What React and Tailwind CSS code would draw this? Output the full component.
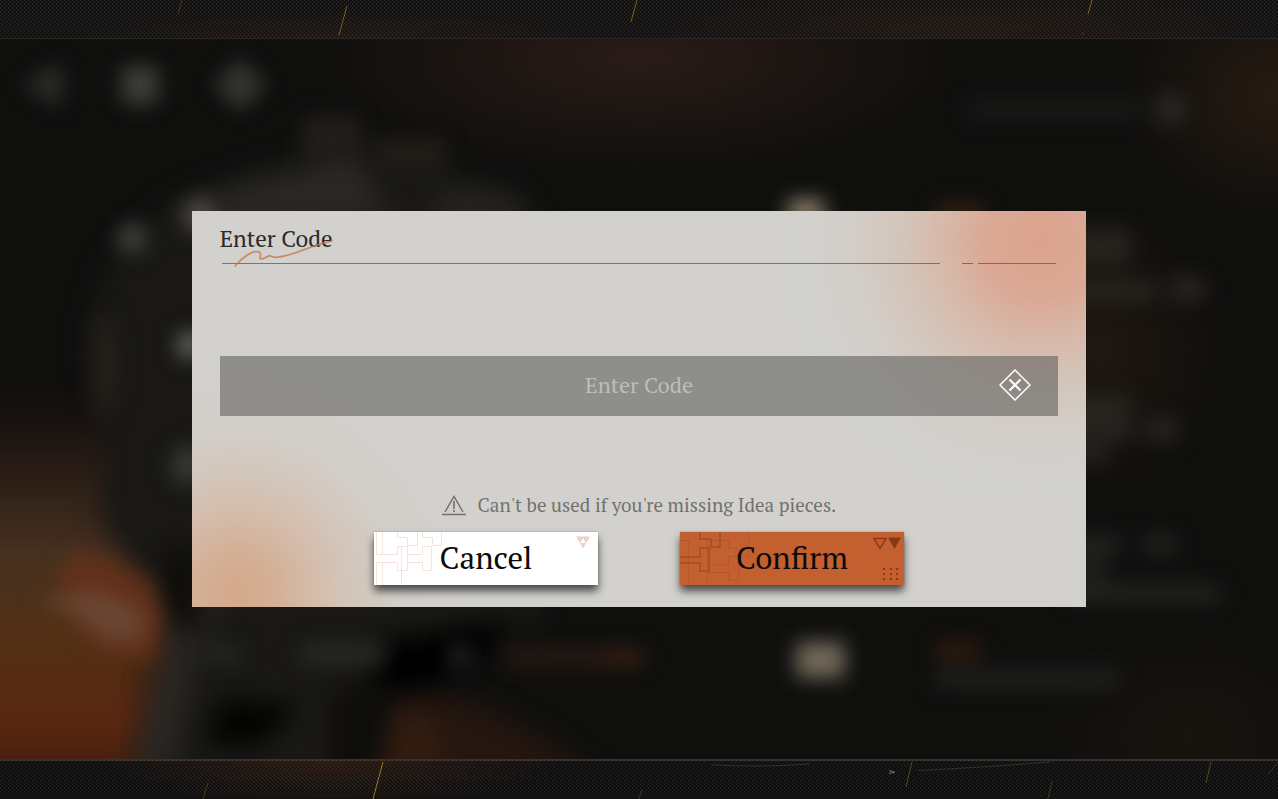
import React, { useState } from 'react';

// strips of woven cloth along the top and bottom edges
function ClothStrip({ id, children }) {
  return (
    <svg className="absolute inset-0 w-full h-full" viewBox="0 0 1278 40" preserveAspectRatio="none" aria-hidden="true">
      <defs>
        <pattern id={`${id}-weave`} width="4" height="4" patternUnits="userSpaceOnUse">
          <rect width="1" height="1" fill="#fff" opacity="0.12" />
          <rect x="2" y="2" width="1" height="1" fill="#fff" opacity="0.12" />
          <rect x="2" width="1" height="1" fill="#000" opacity="0.3" />
          <rect y="2" width="1" height="1" fill="#000" opacity="0.3" />
        </pattern>
        <radialGradient id={`${id}-warm`}>
          <stop offset="0" stopColor="#6b3312" stopOpacity="0.36" />
          <stop offset="1" stopColor="#6b3312" stopOpacity="0" />
        </radialGradient>
      </defs>
      {children}
      <rect width="1278" height="40" fill={`url(#${id}-weave)`} />
    </svg>
  );
}

function Scene() {
  return (
    <svg className="absolute inset-0 w-full h-full" viewBox="0 39 1278 720" preserveAspectRatio="none" aria-hidden="true">
      <defs>
        <filter id="soft" x="-50%" y="-50%" width="200%" height="200%" colorInterpolationFilters="sRGB"><feGaussianBlur stdDeviation="10" /></filter>
        <filter id="softer" x="-50%" y="-50%" width="200%" height="200%" colorInterpolationFilters="sRGB"><feGaussianBlur stdDeviation="13" /></filter>
        <linearGradient id="fire" x1="0" y1="0" x2="0" y2="1">
          <stop offset="0" stopColor="#1c1411" stopOpacity="0" />
          <stop offset="0.13" stopColor="#1c1411" />
          <stop offset="0.45" stopColor="#46301f" />
          <stop offset="0.65" stopColor="#523015" />
          <stop offset="0.88" stopColor="#5a2711" />
          <stop offset="1" stopColor="#42200f" />
        </linearGradient>
        <linearGradient id="fireFade" x1="0" y1="0" x2="1" y2="0">
          <stop offset="0.45" stopColor="#fff" />
          <stop offset="1" stopColor="#fff" stopOpacity="0" />
        </linearGradient>
        <mask id="fireMask"><rect y="380" width="260" height="390" fill="url(#fireFade)" /></mask>
        <radialGradient id="emberTop">
          <stop offset="0" stopColor="#2a1b16" />
          <stop offset="1" stopColor="#2a1b16" stopOpacity="0" />
        </radialGradient>
        <radialGradient id="emberBrown">
          <stop offset="0" stopColor="#271a10" />
          <stop offset="1" stopColor="#271a10" stopOpacity="0" />
        </radialGradient>
      </defs>
      <rect y="39" width="1278" height="720" fill="#0f0f0e" />
      <ellipse cx="640" cy="58" rx="330" ry="120" fill="url(#emberTop)" />
      <ellipse cx="1278" cy="95" rx="160" ry="130" fill="url(#emberBrown)" />
      <ellipse cx="1100" cy="350" rx="130" ry="150" fill="url(#emberBrown)" opacity="0.7" />
      <ellipse cx="1190" cy="735" rx="150" ry="110" fill="url(#emberBrown)" opacity="0.4" />
      <rect y="380" width="260" height="390" fill="url(#fire)" mask="url(#fireMask)" />
      <g filter="url(#softer)">
        <path d="M380 780L400 690L470 700L540 735L600 780Z" fill="#25160f" />
        <path d="M375 780L390 705L430 715L450 780Z" fill="#321c10" />
      </g>

      {/* statue */}
      <g filter="url(#softer)">
        <path d="M165 205L240 175L305 158L320 130L350 125L370 155L440 150L450 175L510 190L540 240L540 630L440 650L372 700L362 800L140 800L172 690L152 590L100 520L104 440L84 345L104 270Z" fill="#191815" />
        <path d="M170 600L225 590L190 680L175 765L130 780Z" fill="#2a2723" />
        <path d="M215 190L300 170L350 145L390 215L220 225Z" fill="#2a2826" />
        <path d="M440 185L520 195L530 225L440 225Z" fill="#262420" />
        <path d="M385 640L520 618L470 660L415 690L370 680Z" fill="#000" />
        <path d="M220 700L300 705L260 745L205 745Z" fill="#020201" />
        <path d="M330 690L390 680L360 780L330 780Z" fill="#0e0d0a" />
        <path d="M165 540L200 560L200 640L172 620Z" fill="#0c0b08" />
      </g>
      <g filter="url(#soft)">
        <path d="M55 575L80 550L105 560L150 582L162 620L150 662L120 655L80 635Z" fill="#62301a" />
        <path d="M35 603L95 590L140 610L145 640L105 640L75 612Z" fill="#6a4733" />
        <circle cx="132" cy="238" r="15" fill="#42413f" />
        <circle cx="200" cy="215" r="18" fill="#4c4845" />
        <circle cx="190" cy="345" r="13" fill="#6c6b6a" />
        <circle cx="190" cy="465" r="20" fill="#363635" />
        <ellipse cx="105" cy="365" rx="12" ry="55" fill="#25201a" />
        <path d="M300 646H385V662H300Z" fill="#2c2c2a" />
        <path d="M205 646H242V662H205Z" fill="#272725" />
        <circle cx="459" cy="655" r="11" fill="#292928" />
        <path d="M302 115H360V160H302Z" fill="#211d19" />
        <path d="M375 138H445V170H375Z" fill="#211d18" />
      </g>

      {/* toolbar icons behind the dialog */}
      <g filter="url(#soft)">
        <path d="M22 85L62 62V108Z" fill="#2e2d2a" />
        <rect x="122" y="66" width="36" height="38" fill="#403e39" />
        <path d="M240 58L266 85L240 112L214 85Z" fill="#363532" />
        <rect x="966" y="101" width="175" height="16" fill="#1b1c19" />
        <circle cx="1171" cy="109" r="15" fill="#2d2a27" />
      </g>
      <g filter="url(#soft)">
        <path d="M788 200H824V224H788Z" fill="#8f846f" />
        <path d="M935 203H985V220H935Z" fill="#35210f" />
        <path d="M796 642H845V678H796Z" fill="#72695a" />
        <path d="M936 642H980V660H936Z" fill="#331b10" />
        <path d="M935 670H1120V688H935Z" fill="#20201e" />
        <path d="M505 648H645V666H505Z" fill="#291913" />
        <path d="M605 648H640V666H605Z" fill="#371f11" />
        <path d="M1070 230H1130V265H1070Z" fill="#27251f" />
        <path d="M1070 282H1155V300H1070Z" fill="#292621" />
        <path d="M1170 278H1205V300H1170Z" fill="#2b2522" />
        <path d="M1070 395H1130V440H1070Z" fill="#272520" />
        <path d="M1145 418H1178V440H1145Z" fill="#272520" />
        <path d="M1070 445H1108V462H1070Z" fill="#272520" />
        <path d="M1070 535H1120V553H1070Z" fill="#242220" />
        <path d="M1145 535H1175V553H1145Z" fill="#252421" />
        <path d="M1070 553H1108V600H1070Z" fill="#1c1c1a" />
        <path d="M1070 584H1220V603H1070Z" fill="#23221f" />
      </g>
    </svg>
  );
}

function Scribble() {
  return (
    <svg className="absolute left-3 top-4 w-28 h-8" viewBox="0 0 112 32" fill="none" aria-hidden="true">
      <path d="M3 27C9 20 21 10 27 13C31 15 26 20 29 20C33 20 36 16 39 17C40 18 41 19 46 18C61 17 76 7 100 2" stroke="#c67346" strokeWidth="1.6" strokeLinecap="round" opacity="0.8" />
    </svg>
  );
}

function CancelPattern() {
  return (
    <svg className="absolute inset-0 w-full h-full" viewBox="0 0 224 53" fill="none" aria-hidden="true">
      <path d="M2.500 0V22.500H23.500V14.500H33.500V38.500H23.500V30.500H2.500V53M8.500 0V22M8.500 31V53M23.500 0V5.500H33.500V13.500H43.500V0M27.500 14V53M33.500 22.500H48.500V14.500H57.500V38.500H48.500V30.500H33.500M48.500 0V5.500H58.500V13.500H67.500V0" stroke="#f5e3db" />
      <path d="M202 4.500H216L209 16.500Z" fill="#eed0c2" />
      <path d="M209 6L212 11H206Z" fill="#fff" />
    </svg>
  );
}

function ConfirmPattern() {
  return (
    <svg className="absolute inset-0 w-full h-full" viewBox="0 0 224 53" fill="none" aria-hidden="true">
      <path d="M0 8.500H8.500V53M27.500 53V8.500H48.500V16.500H58M27.500 33H48.500V24.500H68.500V0M27.500 40.500H48.500V48.500H58.500V25" stroke="#b3572c" />
      <path d="M0 25H20V16H29V39H20V31H0M20 0V7H31V15H40V0" stroke="#a04c26" strokeWidth="1.500" />
      <path d="M194 6.500H206L200 16.500Z" stroke="#8a3c1b" strokeWidth="1.500" />
      <path d="M208 5.500H221L214.500 17Z" fill="#853a1b" />
      <path d="M203 36h2v2h-2zM210 36h2v2h-2zM216 36h2v2h-2zM203 41h2v2h-2zM210 41h2v2h-2zM216 41h2v2h-2zM203 46h2v2h-2zM210 46h2v2h-2zM216 46h2v2h-2z" fill="#853a1b" />
    </svg>
  );
}

export default function App() {
  const [code, setCode] = useState('');

  const handleSubmit = (e) => {
    e.preventDefault();
  };

  return (
    <div className="min-h-screen flex flex-col bg-[#0f0f0e] overflow-hidden font-['PT_Serif','Liberation_Serif',serif]">
      <header className="relative h-[39px] shrink-0 bg-[#151413] border-b border-[#2b2724]">
        <ClothStrip id="top">
          <ellipse cx="340" cy="40" rx="260" ry="30" fill="url(#top-warm)" opacity="0.4" />
          <ellipse cx="960" cy="30" rx="320" ry="44" fill="url(#top-warm)" opacity="0.4" />
          <g stroke="#7b6413" strokeWidth="1">
            <path d="M347 6L339 37M637 0L631 23M1092 0L1088 15" />
            <path d="M182 0L178 15M1083 34V37" opacity="0.5" />
          </g>
        </ClothStrip>
      </header>

      <main className="relative flex-1 flex items-center justify-center pt-5">
        <Scene />

        <form
          onSubmit={handleSubmit}
          role="dialog"
          aria-labelledby="dialog-title"
          className="relative w-[70%] px-7 pt-3 pb-[22px] bg-[#d2d1ce] bg-[radial-gradient(circle_at_95%_8%,#dca38c_0px,#dba48ee6_55px,#d9ae99bb_95px,#d6b8a588_135px,#d4c5ba55_185px,#d3cec81a_235px,#d2d1ce00_270px),radial-gradient(circle_at_5%_96%,#d4a888_0px,#d4ab8ddd_40px,#d5b198b0_75px,#d5bba880_115px,#d4c5ba44_160px,#d2d1ce00_230px)]"
        >
          <div className="relative">
            <h1 id="dialog-title" className="text-[23px] leading-8 text-[#2b2a28]">Enter Code</h1>
            <Scribble />
          </div>
          <div className="flex mt-2 mx-0.5">
            <span className="h-px flex-1 bg-[#777571]" />
            <span className="h-px w-[11px] ml-[22px] bg-[#7c6c64]" />
            <span className="h-px w-[78px] ml-[5px] bg-[#7c6c64]" />
          </div>

          <div className="relative mt-[92px]">
            <input
              type="text"
              aria-label="Enter Code"
              placeholder="Enter Code"
              value={code}
              onChange={e => setCode(e.target.value)}
              className="block w-full h-15 px-16 pb-1 text-center text-[22px] text-white placeholder:text-[#bebdba] bg-[#61615e]/60 focus:outline-none"
            />
            <button type="button" aria-label="Clear" onClick={() => setCode('')} className="absolute right-[27px] top-[13px] w-8 h-8">
              <svg viewBox="0 0 32 32" className="w-8 h-8" fill="none" stroke="#fff" aria-hidden="true">
                <path d="M16 1L31 16L16 31L1 16Z" strokeWidth="1.500" />
                <path d="M10.500 10.500L21.500 21.500M21.500 10.500L10.500 21.500" strokeWidth="2.200" />
              </svg>
            </button>
          </div>

          <p className="flex items-center justify-center gap-3 mt-[77px] text-[19px] leading-6 text-[#72716e]">
            <svg viewBox="0 0 24 22" className="w-6 h-[22px]" fill="none" stroke="currentColor" aria-hidden="true">
              <path d="M3 18L12 2.500L21 18M0 20.500H24" strokeWidth="1.400" />
              <path d="M12 7V15M12 16V18" strokeWidth="1.600" />
            </svg>
            Can't be used if you're missing Idea pieces.
          </p>

          <div className="flex justify-center gap-[82px] mt-[15px] text-[31px] leading-[52px] text-[#0c0b0a]">
            <button type="button" className="relative w-56 h-[53px] pb-0.5 bg-white shadow-[0_6px_8px_#4b4a48,0_0_1px_#777]">
              <CancelPattern />
              <span className="relative">Cancel</span>
            </button>
            <button type="submit" className="relative w-56 h-[53px] pb-0.5 bg-[#c46030] shadow-[0_6px_8px_#4b4a48,0_0_1px_#777]">
              <ConfirmPattern />
              <span className="relative">Confirm</span>
            </button>
          </div>
        </form>
      </main>

      <footer className="relative h-10 shrink-0 bg-[#111010] border-t-2 border-[#37302d]">
        <ClothStrip id="bottom">
          <ellipse cx="330" cy="0" rx="230" ry="44" fill="url(#bottom-warm)" opacity="0.8" />
          <g stroke="#7b6413" strokeWidth="1">
            <path d="M383 1L373 40" stroke="#a08416" />
            <path d="M912 1L906 27M1211 1L1206 23" opacity="0.7" />
            <path d="M208 23L203 40M1052 21L1048 40M642 30L639 40" opacity="0.5" />
          </g>
          <path d="M889 10L895 12L889 13" stroke="#8a8784" fill="none" opacity="0.8" />
          <path d="M711 4Q760 7 810 3M918 10Q980 7 1050 1M1278 1L1268 14" stroke="#55504c" fill="none" opacity="0.5" />
        </ClothStrip>
      </footer>
    </div>
  );
}
